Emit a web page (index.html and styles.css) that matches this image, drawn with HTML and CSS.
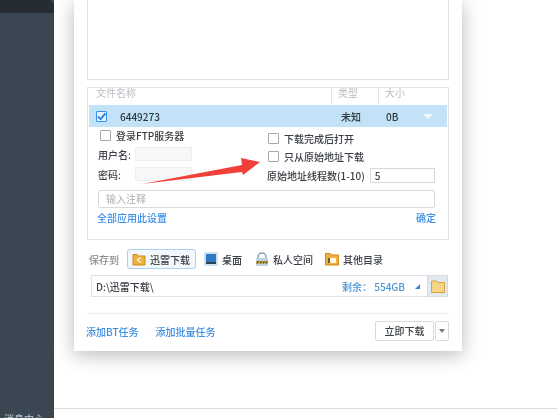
FILE: index.html
```html
<!DOCTYPE html>
<html lang="zh-CN">
<head>
  <meta charset="UTF-8" />
  <title>新建任务</title>
  <link rel="stylesheet" href="styles.css">
</head>
<body>
  <div class="app">
    <aside class="sidebar">
      <div class="sidebar-top"></div>
      <div class="sidebar-bottom">消息中心</div>
    </aside>
    <main class="main">
      <div class="dialog">
        <div class="url-box"></div>

        <div class="file-box">
          <div class="file-head">
            <span class="col-name">文件名称</span>
            <span class="col-type">类型</span>
            <span class="col-size">大小</span>
          </div>
          <div class="file-row">
            <span class="check checked">
              <svg viewBox="0 0 11 11" width="11" height="11"><path d="M2 5.500 4.600 8.200 9.400 2.400" fill="none" stroke="#1f7fe0" stroke-width="1.800"/></svg>
            </span>
            <span class="row-name">6449273</span>
            <span class="row-type">未知</span>
            <span class="row-size">0B</span>
            <span class="row-arrow"></span>
          </div>
          <div class="options">
            <div class="opt-left">
              <label class="opt opt-ftp"><span class="check"></span>登录FTP服务器</label>
              <div class="field"><span class="field-label">用户名:</span><span class="field-input"></span></div>
              <div class="field"><span class="field-label">密码:</span><span class="field-input"></span></div>
            </div>
            <div class="opt-right">
              <label class="opt"><span class="check"></span>下载完成后打开</label>
              <label class="opt"><span class="check"></span>只从原始地址下载</label>
              <div class="threads"><span>原始地址线程数(1-10)</span><span class="thread-input">5</span></div>
            </div>
          </div>
          <div class="note">输入注释</div>
          <div class="box-links"><a>全部应用此设置</a><a>确定</a></div>
        </div>

        <div class="save-row">
          <span class="save-label">保存到</span>
          <span class="place active">
            <svg viewBox="0 0 14 14" width="14" height="14"><path d="M1 2.500h4l1.500 1.500H13v9H1z" fill="#eeb040" stroke="#d08a1c"/><path d="M9 5.500 5.500 8 9 10.500" fill="none" stroke="#fff3cf" stroke-width="1.400"/></svg>
            迅雷下载
          </span>
          <span class="place p-desk">
            <svg viewBox="0 0 14 14" width="14" height="14"><rect width="14" height="14" rx="2" fill="#cfe0ee"/><rect x="2" y="2" width="10" height="8" fill="#2f78c4"/><rect x="2" y="10" width="10" height="2" fill="#33404e"/></svg>
            桌面
          </span>
          <span class="place p-safe">
            <svg viewBox="0 0 14 14" width="14" height="14"><path d="M3 7V5a4 4 0 0 1 8 0v2" fill="none" stroke="#7fa3bf" stroke-width="1.500"/><rect x="1" y="6" width="12" height="8" rx="1" fill="#bcd3e4"/><rect x="1" y="9" width="12" height="2.500" fill="#c9a02c"/><path d="M2 11.500 3.500 9M5 11.500 6.500 9M8 11.500 9.500 9M11 11.500 12.500 9" stroke="#3d3a2a"/></svg>
            私人空间
          </span>
          <span class="place p-other">
            <svg viewBox="0 0 14 14" width="14" height="14"><path d="M.5 1.500h5l1.500 1.500h6.500v10H.5z" fill="#eeb040" stroke="#d08a1c"/><rect x="3" y="6" width="8" height="5" fill="#fff6dd"/><rect x="3" y="6" width="2" height="5" fill="#6b5a2c"/></svg>
            其他目录
          </span>
        </div>

        <div class="path-box">
          <span class="path-text">D:\迅雷下载\</span>
          <span class="path-free">剩余： 554GB</span>
          <span class="path-corner"></span>
          <span class="path-browse">
            <svg viewBox="0 0 14 13" width="14" height="13"><path d="M.5 1h5L7 2.500h6.500v10H.5z" fill="#f6d585" stroke="#d9a440"/></svg>
          </span>
        </div>

        <div class="footer">
          <a>添加BT任务</a>
          <a class="link-batch">添加批量任务</a>
          <span class="btn-now">立即下载</span>
          <span class="btn-more"></span>
        </div>

        <svg class="arrow" viewBox="0 0 120 30" width="120" height="30">
          <path d="M2 27 102 8 101 1 120 5 103 18 102 15Z" fill="#f1403a"/>
        </svg>
      </div>
      <div class="bottom-line"></div>
    </main>
  </div>
</body>
</html>
```

FILE: styles.css
```css
* {
  box-sizing: border-box;
}

html, body {
  margin: 0;
  height: 100%;
  overflow: hidden;
}

body {
  font-family: "Noto Sans CJK SC", "Noto Sans", sans-serif;
  font-size: 10px;
  font-weight: 500;
  color: #3a3f45;
  background: #fff;
}

a {
  color: #3d8fe6;
}

.app {
  display: flex;
  height: 418px;
  filter: blur(0.4px);
}

.sidebar {
  width: 54px;
  background: #3a4652;
  display: flex;
  flex-direction: column;
  justify-content: space-between;
  overflow: hidden;
}

.sidebar-top {
  height: 13px;
  background: #262c33;
  clip-path: polygon(0 0, 50px 0, 54px 4px, 54px 13px, 0 13px);
}

.sidebar-bottom {
  color: #aeb6bd;
  line-height: 10px;
  height: 4px;
  padding-left: 4px;
}

.main {
  flex: 1;
  position: relative;
  padding-left: 20px;
}

.bottom-line {
  position: absolute;
  left: 0;
  right: 0;
  top: 408px;
  height: 1px;
  background: #dcdcdc;
}

.dialog {
  position: relative;
  width: 388px;
  height: 351px;
  padding: 0 13px;
  background: #fff;
  box-shadow: 0 4px 18px rgba(0, 0, 0, 0.28);
}

.url-box {
  height: 80px;
  border: 1px solid #dfe2e5;
  border-top: none;
}

.file-box {
  height: 153px;
  margin-top: 7px;
  padding: 0 1px;
  border: 1px solid #dbe3ec;
}

.file-head {
  display: flex;
  height: 17px;
  line-height: 9px;
  color: #c4c8cc;
}

.col-name {
  width: 242px;
  padding-left: 7px;
}

.col-type {
  width: 47px;
  padding-left: 6px;
  border-left: 1px solid #e2e4e6;
}

.col-size {
  padding-left: 6px;
  border-left: 1px solid #e2e4e6;
}

.file-row {
  display: flex;
  align-items: center;
  height: 22px;
  background: #c2e3f7;
  color: #30363c;
}

.check {
  flex: none;
  display: inline-block;
  width: 11px;
  height: 11px;
  border: 1px solid #a9a9a9;
  background: #fff;
  border-radius: 1px;
}

.check svg {
  display: block;
  margin: -1px;
}

.check.checked {
  margin-left: 7px;
  border-color: #3a8fe6;
  background: #e4f1fb;
}

.row-name {
  width: 221px;
  margin-left: 13px;
}

.row-type {
  width: 45px;
}

.row-size {
  width: 37px;
}

.row-arrow {
  border-left: 5px solid transparent;
  border-right: 5px solid transparent;
  border-top: 5px solid #f1f8fd;
}

.options {
  display: flex;
  height: 63px;
}

.opt-left {
  width: 178px;
  padding-left: 9px;
}

.opt {
  display: flex;
  align-items: center;
  gap: 5px;
  height: 18px;
}

.opt-ftp {
  margin: 0 0 3px 2px;
  height: 17px;
}

.field {
  display: flex;
  align-items: center;
  height: 14px;
  margin-bottom: 6px;
}

.field-label {
  width: 37px;
}

.field-input {
  width: 57px;
  height: 14px;
  border: 1px solid #eceef0;
  background: #f8f8f8;
}

.opt-right {
  padding-top: 2px;
  padding-left: 1px;
}

.threads {
  display: flex;
  align-items: center;
  gap: 5px;
  height: 16px;
  margin: 2px 0 0 -1px;
}

.thread-input {
  width: 65px;
  height: 15px;
  line-height: 13px;
  padding-left: 4px;
  border: 1px solid #d6d9dc;
}

.note {
  width: 337px;
  height: 18px;
  line-height: 16px;
  margin: 0 0 0 9px;
  padding-left: 7px;
  color: #b9bdc1;
  border: 1px solid #d8dbde;
  border-radius: 2px;
}

.box-links {
  display: flex;
  justify-content: space-between;
  width: 339px;
  margin: 2px 0 0 8px;
  line-height: 16px;
}

.save-row {
  display: flex;
  align-items: center;
  height: 20px;
  margin-top: 9px;
  padding-left: 2px;
}

.save-label {
  width: 38px;
  color: #8a8e92;
}

.place {
  display: flex;
  align-items: center;
  gap: 4px;
  height: 20px;
}

.place.active {
  width: 69px;
  gap: 4px;
  padding-left: 4px;
  border: 1px solid #a9d1f6;
  border-radius: 3px;
  background: #f3f8fd;
}

.p-desk {
  margin-left: 8px;
}

.p-safe {
  margin-left: 13px;
}

.p-other {
  margin-left: 12px;
}

.path-box {
  display: flex;
  align-items: center;
  width: 357px;
  height: 22px;
  margin: 6px 0 0 4px;
  padding-left: 4px;
  border: 1px solid #dde3ea;
}

.path-text {
  width: 246px;
}

.path-free {
  width: 73px;
  color: #4a94d6;
}

.path-corner {
  width: 0;
  height: 0;
  border-left: 5px solid transparent;
  border-bottom: 5px solid #3f84dc;
}

.path-browse {
  display: flex;
  align-items: center;
  justify-content: center;
  width: 21px;
  height: 22px;
  margin-left: auto;
  margin-right: -1px;
  background: #e3e9f0;
  border: 1px solid #d4dbe3;
}

.footer {
  display: flex;
  align-items: center;
  height: 38px;
  margin-top: 16px;
  padding-bottom: 3px;
  border-top: 1px solid #ebeff4;
}

.footer a {
  margin-left: -1px;
}

.footer .link-batch {
  margin-left: 17px;
}

.btn-now {
  width: 59px;
  height: 20px;
  margin-left: auto;
  line-height: 18px;
  text-align: center;
  border: 1px solid #d8dadc;
  border-radius: 2px;
}

.btn-more {
  position: relative;
  width: 14px;
  height: 20px;
  margin-left: 1px;
  border: 1px solid #d8dadc;
  border-radius: 2px;
}

.btn-more::after {
  content: "";
  position: absolute;
  left: 3px;
  top: 7px;
  border-left: 3px solid transparent;
  border-right: 3px solid transparent;
  border-top: 4px solid #6c7d8e;
}

.arrow {
  position: absolute;
  left: 66px;
  top: 157px;
}
```
